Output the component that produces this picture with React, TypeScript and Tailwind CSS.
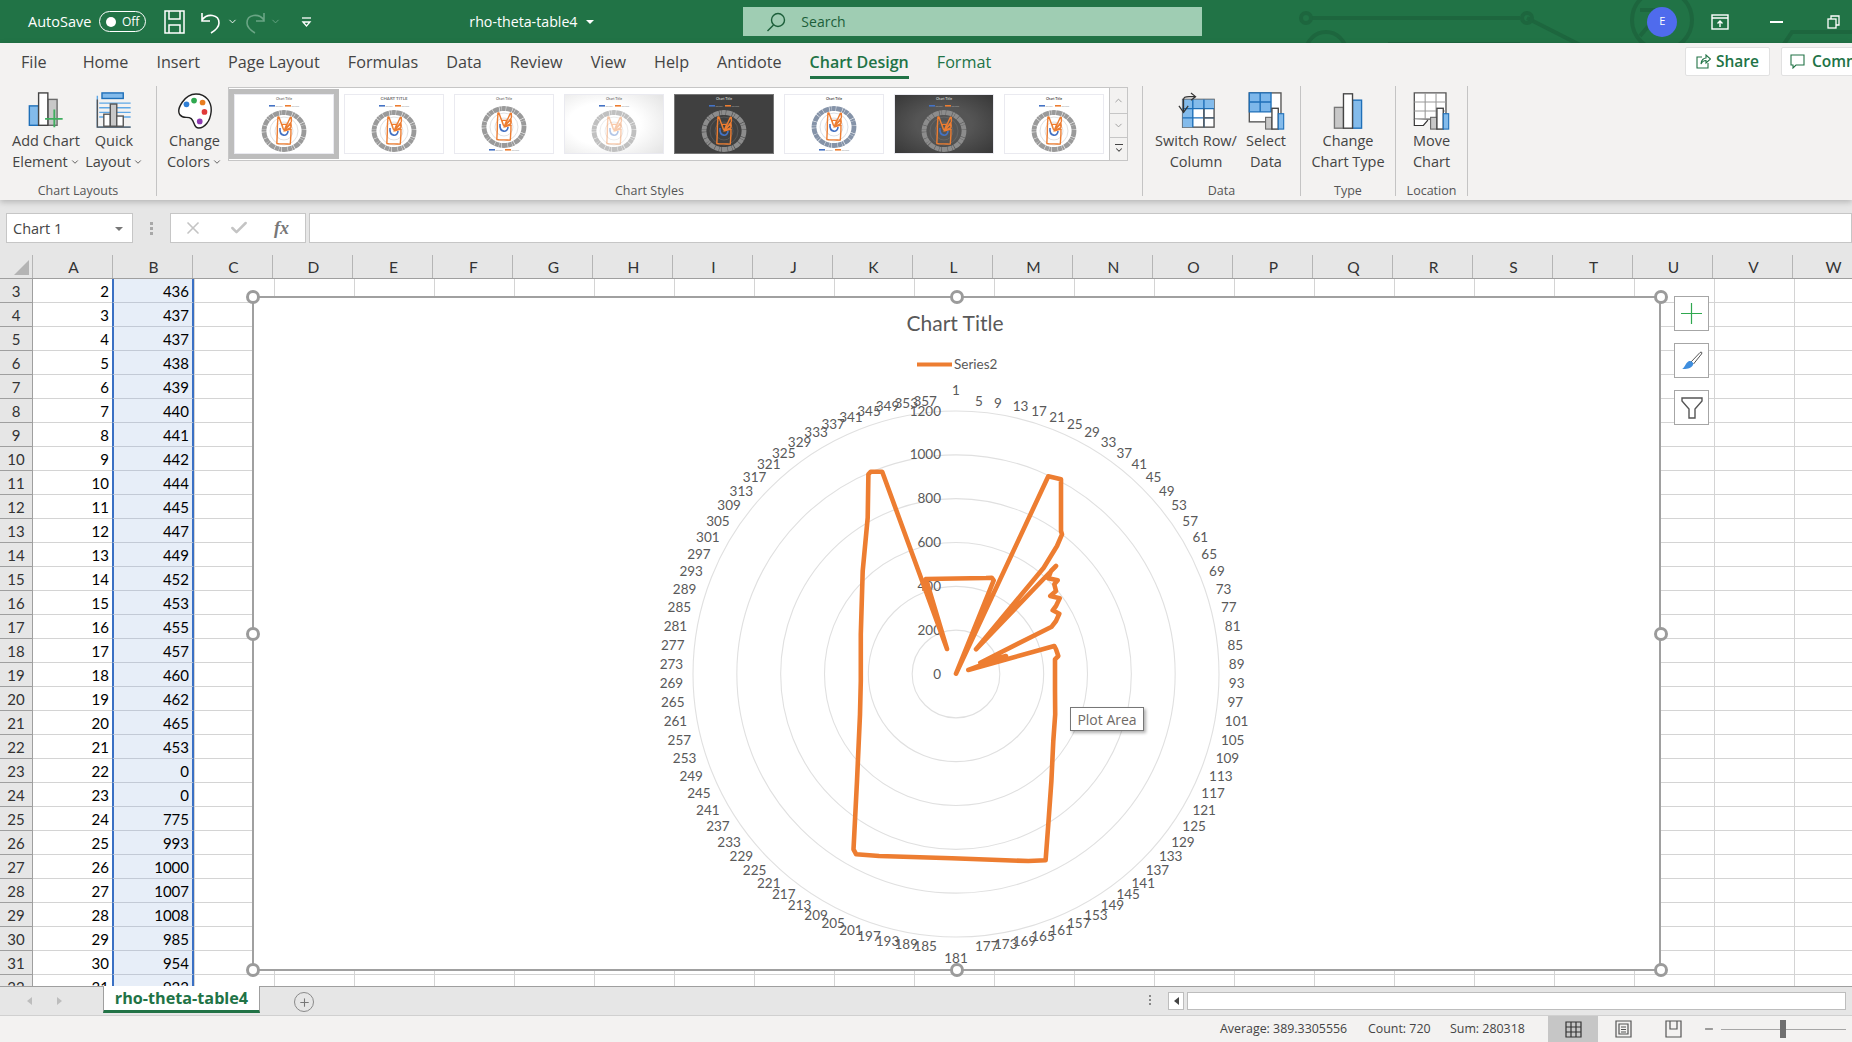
import { ReactNode } from "react";
import { ChevronDown, ChevronUp, Minus, Plus, Check, X } from "lucide-react";

const columns = "ABCDEFGHIJKLMNOPQRSTUVW".split("");
const values = [436, 437, 437, 438, 439, 440, 441, 442, 444, 445, 447, 449, 452, 453, 455, 457, 460, 462, 465, 453, 0, 0, 775, 993, 1000, 1007, 1008, 985, 954, 923];
const tabs = ["Home", "Insert", "Page Layout", "Formulas", "Data", "Review", "View", "Help", "Antidote"];

const CX = 955;
const CY = 673;
const R = 263;

// series outline, in page pixels
const series =
  "M946 648 L925 578 L985 577 L990.7 576.7 L992.7 579.3 L955 672.7 L1047.3 475.3 L1060 478.3 L1060 530 L1061 533.3 " +
  "L1056 545 L1042.7 566.7 L975 648.3 L1055 565 L1050 570 L1047.3 577.3 L1056.7 579.3 L1053.3 583.3 L1055 590 L1049.3 595 " +
  "L1058.7 597.3 L1055 605 L1051.7 609.3 L1058.3 612.7 L1055 620 L1050.7 625.7 L979.3 661.7 L1005 655 L967.3 669 L1053.3 645 " +
  "L1055 648.3 L1057.3 655 L1054 658.3 L1054 690 L1054.2 713.3 L1052.3 740 L1050.4 780 L1047.3 823.3 L1044.6 859.3 L1027.4 860 " +
  "L1004.4 859.3 L950.9 857.3 L878.1 855 L855.2 853.3 L852.5 848.3 L856 780 L859 713.3 L859.8 680 L859.8 633.3 L861.7 570 " +
  "L866.7 516.7 L867.4 473.3 L869.7 470.7 L881.2 470.7 Z";

const angleLabels = Array.from({ length: 90 }, (_, i) => 1 + i * 4);

function IconBox({ children }: { children: ReactNode }) {
  return <div className="h-[39px] flex items-center justify-center">{children}</div>;
}

function AddElementIcon() {
  return (
    <svg width="36" height="37" viewBox="0 0 38 40" fill="none">
      <rect x="1" y="15" width="10" height="21" fill="#83bbeb" stroke="#1e6fb8" strokeWidth="1.5" />
      <rect x="21" y="8" width="10" height="28" fill="#c8c8c8" stroke="#6b6b6b" strokeWidth="1.5" />
      <rect x="11" y="1" width="10" height="35" fill="#fff" stroke="#444" strokeWidth="1.5" />
      <path d="M28 19V38M18 29H37" stroke="#3fae5f" strokeWidth="2" />
    </svg>
  );
}

function QuickLayoutIcon() {
  return (
    <svg width="36" height="37" viewBox="0 0 38 40" fill="none">
      <rect x="6" y="1" width="23" height="6" fill="#83bbeb" stroke="#1e6fb8" strokeWidth="1.5" />
      <path d="M1 4V38H37M3 12H37M3 17H37M3 22H37M3 27H37" stroke="#5fa8e6" strokeWidth="1.5" />
      <path d="M1 8V38H37" stroke="#555" strokeWidth="1.5" />
      <rect x="8" y="24" width="7" height="13" fill="#fff" stroke="#555" strokeWidth="1.5" />
      <rect x="15" y="13" width="7" height="24" fill="#c8c8c8" stroke="#555" strokeWidth="1.5" />
      <rect x="22" y="26" width="7" height="11" fill="#fff" stroke="#555" strokeWidth="1.5" />
    </svg>
  );
}

function PaletteIcon() {
  return (
    <svg width="36" height="38" viewBox="0 0 38 40" fill="none">
      <path
        d="M20 2C31 2 37 11 36 21C35 31 29 38 23 38C17 38 19 31 15 28C11 25 7 29 3 24C-1 18 8 2 20 2Z"
        fill="#fff"
        stroke="#222"
        strokeWidth="1.5"
      />
      <circle cx="10" cy="13" r="3" fill="#2f7fd6" />
      <circle cx="18" cy="9" r="3" fill="#2fa84f" />
      <circle cx="27" cy="11" r="3" fill="#e87d1e" />
      <circle cx="29" cy="21" r="3" fill="#e03a3a" />
      <circle cx="24" cy="31" r="3" fill="#8e3ab0" />
    </svg>
  );
}

function SwitchIcon() {
  return (
    <svg width="37" height="37" viewBox="0 0 40 40" fill="none">
      <rect x="5" y="8" width="34" height="30" fill="#fff" stroke="#555" strokeWidth="1.5" />
      <path d="M5 8H39V18H16V38H5Z" fill="#83bbeb" />
      <path d="M5 18H39M5 28H39M16 8V38M28 8V38" stroke="#1e6fb8" strokeWidth="1.5" />
      <path d="M28 28H39M28 18V38" stroke="#555" strokeWidth="1.5" />
      <path d="M1 15L6 22L11 15M6 22V8Q6 5 12 5H18M14 1L19 5L14 9" stroke="#333" strokeWidth="1.3" fill="none" />
    </svg>
  );
}

function SelectDataIcon() {
  return (
    <svg width="37" height="38" viewBox="0 0 40 42" fill="none">
      <rect x="1" y="1" width="35" height="32" fill="#fff" stroke="#555" strokeWidth="1.5" />
      <path d="M1 1H25V22H1Z" fill="#7db7ea" stroke="#1e6fb8" strokeWidth="1.5" />
      <path d="M1 11H25M13 1V22" stroke="#1e6fb8" strokeWidth="1.5" />
      <rect x="19" y="28" width="7" height="13" fill="#c8c8c8" stroke="#666" strokeWidth="1.2" />
      <rect x="26" y="18" width="7" height="23" fill="#fff" stroke="#444" strokeWidth="1.5" />
      <rect x="33" y="24" width="6" height="17" fill="#83bbeb" stroke="#1e6fb8" strokeWidth="1.2" />
    </svg>
  );
}

function ChartTypeIcon() {
  return (
    <svg width="32" height="38" viewBox="0 0 34 42" fill="none">
      <rect x="2" y="17" width="10" height="23" fill="#c8c8c8" stroke="#777" strokeWidth="1.5" />
      <rect x="22" y="9" width="10" height="31" fill="#83bbeb" stroke="#1e6fb8" strokeWidth="1.5" />
      <rect x="12" y="2" width="10" height="38" fill="#fff" stroke="#444" strokeWidth="1.5" />
    </svg>
  );
}

function MoveChartIcon() {
  return (
    <svg width="37" height="38" viewBox="0 0 40 42" fill="none">
      <path d="M1 1H36V30H1Z" fill="#fff" stroke="#555" strokeWidth="1.5" />
      <path d="M1 11H36M1 21H36M13 1V30M25 1V30" stroke="#999" strokeWidth="1.2" />
      <path d="M1 30V37H11L16 31" fill="#fff" stroke="#333" strokeWidth="1.3" />
      <rect x="19" y="28" width="7" height="13" fill="#c8c8c8" stroke="#666" strokeWidth="1.2" />
      <rect x="26" y="18" width="7" height="23" fill="#fff" stroke="#444" strokeWidth="1.5" />
      <rect x="33" y="24" width="6" height="17" fill="#83bbeb" stroke="#1e6fb8" strokeWidth="1.2" />
    </svg>
  );
}

function BigButton({ icon, lines, width, caret }: { icon: ReactNode; lines: string[]; width: string; caret?: boolean }) {
  return (
    <div className={`${width} pt-[5px] flex flex-col items-center text-[14.5px] leading-[21px] text-[#444] shrink-0`}>
      <IconBox>{icon}</IconBox>
      <span className="whitespace-nowrap">{lines[0]}</span>
      <span className="flex items-center gap-[2px] whitespace-nowrap">
        {lines[1]}
        {caret && <ChevronDown size={10} strokeWidth={2} />}
      </span>
    </div>
  );
}

function Group({ label, width, pad, children }: { label: string; width: string; pad: string; children: ReactNode }) {
  return (
    <div className={`${width} h-[110px] mt-px flex flex-col border-r border-[#c4c4c4] shrink-0`}>
      <div className={`flex-1 flex items-start ${pad}`}>{children}</div>
      <div className="h-[20px] -mb-[5px] text-center text-[12.5px] leading-[20px] text-[#555]">{label}</div>
    </div>
  );
}

type ThumbStyle = {
  bg: string;
  ring: string;
  title: string;
  titleColor: string;
  legendBottom?: boolean;
  size?: number;
  fade?: boolean;
};

const thumbs: ThumbStyle[] = [
  { bg: "#fff", ring: "#9a9a9a", title: "Chart Title", titleColor: "#777" },
  { bg: "#fff", ring: "#9a9a9a", title: "CHART TITLE", titleColor: "#777", size: 4.4 },
  { bg: "#fff", ring: "#9a9a9a", title: "Chart Title", titleColor: "#777", legendBottom: true },
  { bg: "url(#thumbFade)", ring: "#c0c0c0", title: "Chart Title", titleColor: "#777", fade: true },
  { bg: "#404040", ring: "#8c8c8c", title: "Chart Title", titleColor: "#ccc" },
  { bg: "#fff", ring: "#8593a8", title: "Chart Title", titleColor: "#444", legendBottom: true },
  { bg: "url(#thumbDark)", ring: "#8c8c8c", title: "Chart Title", titleColor: "#ccc" },
  { bg: "#fff", ring: "#9a9a9a", title: "Chart Title", titleColor: "#444" },
];

function Thumb({ style }: { style: ThumbStyle }) {
  const legendY = style.legendBottom ? 56 : 12;
  const cy = style.legendBottom ? 33 : 37;
  const textFill = style.titleColor === "#ccc" ? "#aaa" : "#999";
  return (
    <svg width="100" height="60" viewBox="0 0 100 60" className="block">
      <defs>
        <radialGradient id="thumbFade" cx="0.4" cy="0.5" r="0.8">
          <stop offset="0.45" stopColor="#fff" />
          <stop offset="1" stopColor="#e2e2e2" />
        </radialGradient>
        <radialGradient id="thumbDark" r="0.8">
          <stop offset="0.35" stopColor="#555" />
          <stop offset="1" stopColor="#303030" />
        </radialGradient>
      </defs>
      <rect x="0.5" y="0.5" width="99" height="59" fill={style.bg} stroke={style.bg === "#404040" ? "#777" : "#eaeaf0"} />
      <text x="50" y="6" textAnchor="middle" fontSize={style.size ?? 3.4} fill={style.titleColor} fontFamily="Lato" fontWeight="700">
        {style.title}
      </text>
      <rect x="35" y={legendY - 1} width="6" height="1.6" fill="#4472c4" />
      <text x="41.5" y={legendY + 0.6} fontSize="2.4" fill={textFill} fontFamily="Lato">
        Series1
      </text>
      <rect x="51" y={legendY - 1} width="6" height="1.6" fill="#ed7d31" />
      <text x="57.5" y={legendY + 0.6} fontSize="2.4" fill={textFill} fontFamily="Lato">
        Series2
      </text>
      <ellipse cx="50" cy={cy} rx="20" ry="18.5" fill="none" stroke={style.ring} strokeWidth="4.8" strokeDasharray="6 0.5 2 0.3 4 0.4" />
      <circle cx="50" cy={cy} r="14" fill="none" stroke={style.ring} strokeWidth="0.3" />
      <circle cx="50" cy={cy} r="9" fill="none" stroke={style.ring} strokeWidth="0.3" />
      <g transform={`translate(50 ${cy}) scale(0.07) translate(-955 -673)`} opacity={style.fade ? 0.4 : 1}>
        <path d={series} fill="none" stroke="#ed7d31" strokeWidth="20" strokeLinejoin="round" />
      </g>
      <path d={`M46 ${cy - 3}C45 ${cy + 6} 54 ${cy + 6} 54 ${cy}`} fill="none" stroke="#4472c4" strokeWidth="1.6" opacity={style.fade ? 0.4 : 1} />
    </svg>
  );
}

function Gallery() {
  return (
    <div className="mt-px w-[900px] h-[74px] flex bg-white border border-[#c6c6c6] shrink-0">
      <div className="flex items-center flex-1">
        {thumbs.map((t, i) => (
          <div
            key={i}
            className={
              i === 0
                ? "w-[110px] h-[70px] border-[5px] border-[#bdbdbd] flex items-center justify-center shrink-0"
                : "w-[110px] h-[70px] flex items-center justify-center shrink-0"
            }
          >
            <Thumb style={t} />
          </div>
        ))}
      </div>
      <div className="w-[18px] flex flex-col bg-[#f3f2f1] text-[#9a9a9a]">
        <div className="h-[26px] flex items-center justify-center border-l border-b border-[#c6c6c6]">
          <ChevronUp size={11} />
        </div>
        <div className="h-[24px] flex items-center justify-center border-l border-b border-[#c6c6c6]">
          <ChevronDown size={11} />
        </div>
        <div className="flex-1 flex flex-col items-center justify-center border-l border-[#c6c6c6] text-[#444]">
          <div className="w-[8px] h-px bg-[#444]" />
          <ChevronDown size={10} strokeWidth={2.5} />
        </div>
      </div>
    </div>
  );
}

function TitleBar() {
  return (
    <div className="relative h-[43px] bg-[#217346] flex items-center text-white shrink-0 overflow-hidden">
      <svg className="absolute left-0 top-0" width="1852" height="43" fill="none" stroke="#1d663e" strokeWidth="4">
        <path d="M1311 18H1520M1527 18L1590 50" />
        <circle cx="1306" cy="18" r="5" />
        <circle cx="1527" cy="18" r="5" />
        <path d="M1390 50V44H1520" />
        <circle cx="1326" cy="52" r="20" />
        <circle cx="1662" cy="20" r="30" />
        <path d="M1640 10H1662L1640 36" />
        <path d="M1780 50L1792 32H1852" />
      </svg>
      <div className="relative flex items-center w-full">
        <span className="ml-[28px] text-[14.5px]">AutoSave</span>
        <div className="ml-[8px] w-[47px] h-[21px] rounded-full border border-white flex items-center justify-between px-[6px]">
          <span className="w-[10px] h-[10px] rounded-full bg-white" />
          <span className="text-[12px]">Off</span>
        </div>
        <svg className="ml-[18px]" width="21" height="24" viewBox="0 0 21 24" fill="none" stroke="#fff" strokeWidth="1.5">
          <path d="M1 1H20V23H1Z" />
          <path d="M5 1V9H16V1M5 23V15H16V23" />
        </svg>
        <svg className="ml-[16px]" width="20" height="24" viewBox="0 0 20 24" fill="none" stroke="#fff" strokeWidth="1.6">
          <path d="M1 3V11H9M1 10C6 3 18 4 18 13C18 17 15 20 10 23" />
        </svg>
        <ChevronDown size={11} className="ml-[6px]" strokeWidth={2} />
        <svg className="ml-[7px]" width="20" height="24" viewBox="0 0 20 24" fill="none" stroke="#6aa585" strokeWidth="1.6">
          <path d="M19 3V11H11M19 10C14 3 2 4 2 13C2 17 5 20 10 23" />
        </svg>
        <ChevronDown size={11} className="ml-[5px] text-[#6aa585]" strokeWidth={2} />
        <svg className="ml-[20px]" width="11" height="12" viewBox="0 0 11 12" fill="none" stroke="#fff" strokeWidth="1.3">
          <path d="M1 2H10" />
          <path d="M2 6L5.5 10L9 6Z" />
        </svg>
        <span className="ml-[157px] w-[109px] text-[14.2px] whitespace-nowrap">rho-theta-table4</span>
        <span className="ml-[8px] w-0 h-0 border-x-[4px] border-x-transparent border-t-[4px] border-t-white" />
        <div className="ml-[149px] w-[459px] h-[29px] bg-[#9fcdb3] flex items-center text-[#1c5f3a] shrink-0">
          <svg className="ml-[23px]" width="20" height="20" viewBox="0 0 20 20" fill="none" stroke="#1c5f3a" strokeWidth="1.4">
            <circle cx="12" cy="8" r="6.5" />
            <path d="M7.5 13L1.5 19" />
          </svg>
          <span className="ml-[15px] text-[14px]">Search</span>
        </div>
        <div className="ml-[445px] w-[30px] h-[30px] rounded-full bg-[#4f6bed] flex items-center justify-center text-[11px] shrink-0">E</div>
        <svg className="ml-[34px]" width="18" height="16" viewBox="0 0 18 16" fill="none" stroke="#fff" strokeWidth="1.4">
          <rect x="1" y="1" width="16" height="14" />
          <path d="M1 4H17M9 13V7M6.5 9.5L9 7L11.5 9.5" />
        </svg>
        <div className="ml-[41px] w-[13px] h-[2px] bg-white" />
        <svg className="ml-[44px]" width="13" height="14" viewBox="0 0 13 14" fill="none" stroke="#fff" strokeWidth="1.3">
          <rect x="1" y="4" width="8" height="9" />
          <path d="M4 4V1H12V10H9" />
        </svg>
      </div>
    </div>
  );
}

function Ribbon() {
  return (
    <div className="relative z-10 h-[157px] bg-[#f3f2f1] shadow-[0_2px_6px_rgba(0,0,0,0.22)] shrink-0 overflow-hidden">
      <div className="h-[38px] flex items-center pl-[21px] gap-[28px] text-[16.2px] text-[#444] whitespace-nowrap relative mb-[4px]">
        <span className="mr-[8px]">File</span>
        {tabs.map((t) => (
          <span key={t}>{t}</span>
        ))}
        <span className="relative font-semibold text-[16px] text-[#217346]">
          Chart Design
          <span className="absolute left-0 right-0 -bottom-[5px] h-[3px] bg-[#217346]" />
        </span>
        <span className="text-[#217346]">Format</span>
        <div className="absolute left-[1685px] top-[4px] w-[85px] h-[29px] bg-white border border-[#e1e1e1] rounded-[2px] flex items-center justify-center gap-[5px] text-[15.5px] font-semibold text-[#217346]">
          <svg className="shrink-0" width="15" height="15" viewBox="0 0 15 15" fill="none" stroke="#217346" strokeWidth="1.1">
            <path d="M6 3H1V14H12V9M5 10C5 6 8 4 10 4V1L14.5 5L10 9V6.5C8 6.5 6 8 5 10Z" />
          </svg>
          Share
        </div>
        <div className="absolute left-[1781px] top-[4px] w-[110px] h-[29px] bg-white border border-[#e1e1e1] rounded-[2px] flex items-center pl-[8px] gap-[7px] text-[15.5px] font-semibold text-[#217346]">
          <svg className="shrink-0" width="15" height="15" viewBox="0 0 15 15" fill="none" stroke="#217346" strokeWidth="1.1">
            <path d="M1 1H14V11H6L3 14V11H1Z" />
          </svg>
          Comments
        </div>
      </div>
      <div className="flex">
        <Group label="Chart Layouts" width="w-[157px]" pad="pl-[12px]">
          <BigButton icon={<AddElementIcon />} lines={["Add Chart", "Element"]} width="w-[68px]" caret />
          <BigButton icon={<QuickLayoutIcon />} lines={["Quick", "Layout"]} width="w-[68px]" caret />
        </Group>
        <Group label="Chart Styles" width="w-[986px]" pad="pl-[4px]">
          <BigButton icon={<PaletteIcon />} lines={["Change", "Colors"]} width="w-[67px]" caret />
          <Gallery />
        </Group>
        <Group label="Data" width="w-[158px]" pad="pl-[18px]">
          <BigButton icon={<SwitchIcon />} lines={["Switch Row/", "Column"]} width="w-[70px]" />
          <BigButton icon={<SelectDataIcon />} lines={["Select", "Data"]} width="w-[70px]" />
        </Group>
        <Group label="Type" width="w-[95px]" pad="justify-center">
          <BigButton icon={<ChartTypeIcon />} lines={["Change", "Chart Type"]} width="w-[90px]" />
        </Group>
        <Group label="Location" width="w-[72px]" pad="justify-center">
          <BigButton icon={<MoveChartIcon />} lines={["Move", "Chart"]} width="w-[70px]" />
        </Group>
      </div>
    </div>
  );
}

function FormulaBar() {
  return (
    <div className="h-[55px] bg-[#e6e6e6] pt-[13px] pl-[6px] flex items-start shrink-0">
      <div className="w-[127px] h-[30px] bg-white border border-[#c6c6c6] flex items-center justify-between pl-[6px] pr-[9px] pt-[1px] text-[14.5px] text-[#444]">
        Chart 1
        <span className="w-0 h-0 border-x-[4px] border-x-transparent border-t-[4px] border-t-[#777]" />
      </div>
      <div className="w-[37px] h-[30px] flex flex-col items-center justify-center gap-[2px]">
        <span className="w-[3px] h-[3px] bg-[#a8a8a8]" />
        <span className="w-[3px] h-[3px] bg-[#a8a8a8]" />
        <span className="w-[3px] h-[3px] bg-[#a8a8a8]" />
      </div>
      <div className="w-[136px] h-[30px] bg-white border border-[#c6c6c6] flex items-center text-[#c4c4c4]">
        <X size={20} className="ml-[12px]" strokeWidth={2} />
        <Check size={20} className="ml-[26px]" strokeWidth={3} />
        <span className="ml-[25px] font-['Liberation_Serif',serif] italic font-bold text-[18px] text-[#777]">fx</span>
      </div>
      <div className="ml-[3px] flex-1 h-[30px] bg-white border border-[#c6c6c6]" />
    </div>
  );
}

function ColumnHeaders() {
  return (
    <div className="h-[24px] flex bg-[#e6e6e6] border-b border-[#9f9f9f] shrink-0 overflow-hidden font-['Lato',sans-serif] text-[15.5px] text-[#333]">
      <div className="w-[33px] h-full border-r border-[#b5b5b5] relative shrink-0">
        <span className="absolute right-[3px] bottom-[3px] w-0 h-0 border-l-[15px] border-l-transparent border-b-[15px] border-b-[#b4b4b4]" />
      </div>
      {columns.map((c) => (
        <div key={c} className="w-[80px] h-full border-r border-[#b5b5b5] flex items-center justify-center pl-[2px] pt-[2px] shrink-0">
          {c}
        </div>
      ))}
    </div>
  );
}

function Rows() {
  return (
    <div className="font-['Lato',sans-serif] text-[15px] text-black">
      {values.map((v, i) => (
        <div key={i} className="h-[24px] flex">
          <div className="w-[33px] bg-[#e6e6e6] border-r border-b border-[#9f9f9f] flex items-center justify-center pt-[2px] text-[#333] shrink-0">
            {i + 3}
          </div>
          <div className="w-[79px] border-b border-[#d4d4d4] flex items-center justify-end pr-[3px] pt-[2px] shrink-0">{i + 2}</div>
          <div className="w-[82px] bg-[#e7eef8] border-x-2 border-x-[#3a70c4] border-b border-b-[#c3cad6] flex items-center justify-end pr-[3px] pt-[2px] shrink-0">
            {v}
          </div>
          {columns.slice(2).map((c) => (
            <div key={c} className="w-[80px] border-l border-b border-[#d4d4d4] shrink-0" />
          ))}
        </div>
      ))}
    </div>
  );
}

function RadarChart() {
  const labels = angleLabels.map((deg) => {
    const t = ((deg - 1) * Math.PI) / 180;
    const px = CX + R * Math.sin(t);
    const py = CY - R * Math.cos(t);
    if (deg === 1) return { deg, x: CX, y: 389, anchor: "middle" };
    if (deg === 181) return { deg, x: CX, y: 957, anchor: "middle" };
    return {
      deg,
      x: px + Math.sin(t) * 10,
      y: py - Math.cos(t) * 10,
      anchor: Math.sin(t) > 0 ? "start" : "end",
    };
  });

  return (
    <svg className="absolute inset-0 overflow-visible" width="1407" height="673" viewBox="253 297 1407 673" fontFamily="Lato">
      {[1, 2, 3, 4, 5, 6].map((k) => (
        <circle key={k} cx={CX} cy={CY} r={(k * R) / 6} fill="none" stroke="#e0e0e0" strokeWidth="1.1" />
      ))}
      <text x={CX - 1} y={330} textAnchor="middle" fontSize="21" fill="#595959">
        Chart Title
      </text>
      <path d="M916 363.5H951" stroke="#ed7d31" strokeWidth="4" />
      <text x={953} y={367.5} fontSize="13.5" fill="#595959">
        Series2
      </text>
      {labels.map((l) => (
        <text key={l.deg} x={l.x} y={l.y + 4.5} textAnchor={l.anchor as "start" | "end" | "middle"} fontSize="13.5" fill="#595959">
          {l.deg}
        </text>
      ))}
      {[0, 200, 400, 600, 800, 1000, 1200].map((v, i) => (
        <text key={v} x={940} y={CY - (i * R) / 6 + 4.5} textAnchor="end" fontSize="13.5" fill="#595959">
          {v}
        </text>
      ))}
      <path d={series} fill="none" stroke="#ed7d31" strokeWidth="4.6" strokeLinejoin="round" strokeLinecap="round" />
    </svg>
  );
}

function Handle({ className }: { className: string }) {
  return <span className={`absolute w-[14px] h-[14px] rounded-full bg-white border-[3px] border-[#9b9b9b] ${className}`} />;
}

function ChartObject() {
  return (
    <>
      <div className="absolute left-[252px] top-[17px] w-[1409px] h-[675px] bg-white border-2 border-[#a0a0a0]">
        <RadarChart />
        <Handle className="-left-[8px] -top-[8px]" />
        <Handle className="left-[696px] -top-[8px]" />
        <Handle className="-right-[9px] -top-[8px]" />
        <Handle className="-left-[8px] top-[329px]" />
        <Handle className="-right-[9px] top-[329px]" />
        <Handle className="-left-[8px] -bottom-[8px]" />
        <Handle className="left-[696px] -bottom-[8px]" />
        <Handle className="-right-[9px] -bottom-[8px]" />
        <div className="absolute left-[816px] top-[409px] w-[74px] h-[24px] bg-white border border-[#777] shadow-[2px_2px_3px_rgba(0,0,0,0.3)] flex items-center justify-center text-[14px] text-[#6f6a66]">
          Plot Area
        </div>
      </div>
      <div className="absolute left-[1674px] top-[17px] flex flex-col gap-[12px]">
        <div className="w-[35px] h-[35px] bg-white border border-[#a6a6a6] flex items-center justify-center">
          <svg width="21" height="21" viewBox="0 0 21 21" stroke="#2fa84f" strokeWidth="1.2">
            <path d="M10.5 0V21M0 10.5H21" />
          </svg>
        </div>
        <div className="w-[35px] h-[35px] bg-white border border-[#a6a6a6] flex items-center justify-center">
          <svg width="22" height="20" viewBox="0 0 22 20" fill="none">
            <path d="M10 11L19 1.5C20.5 0.5 21.5 1.5 20.5 3L12.5 13" fill="#fff" stroke="#555" strokeWidth="1" />
            <path d="M8 10C11 10 13 12 12 14C10 18 5 18 1 18C4 17 4 12 8 10Z" fill="#3f8ede" />
          </svg>
        </div>
        <div className="w-[35px] h-[35px] bg-white border border-[#a6a6a6] flex items-center justify-center">
          <svg width="22" height="22" viewBox="0 0 22 22" fill="none" stroke="#555" strokeWidth="1.4">
            <path d="M1 1H21V4L14 12V21H8V12L1 4Z" />
          </svg>
        </div>
      </div>
    </>
  );
}

function SheetTabs() {
  return (
    <div className="relative z-10 h-[29px] bg-[#e6e6e6] border-t border-[#9f9f9f] flex shrink-0">
      <span className="ml-[27px] mt-[10px] w-0 h-0 border-y-[4px] border-y-transparent border-r-[5px] border-r-[#bdbdbd]" />
      <span className="ml-[25px] mt-[10px] w-0 h-0 border-y-[4px] border-y-transparent border-l-[5px] border-l-[#bdbdbd]" />
      <div className="ml-[41px] -mt-px w-[157px] h-[27px] bg-white border-x border-[#9f9f9f] border-b-[3px] border-b-[#217346] flex items-center justify-center text-[16.2px] font-bold text-[#217346] whitespace-nowrap">
        rho-theta-table4
      </div>
      <div className="ml-[34px] mt-[5px] w-[20px] h-[20px] rounded-full border-[1.5px] border-[#8a8a8a] flex items-center justify-center text-[#777]">
        <Plus size={13} strokeWidth={2} />
      </div>
      <div className="ml-[835px] mt-[8px] flex flex-col gap-[2px]">
        <span className="w-[2px] h-[2px] bg-[#888]" />
        <span className="w-[2px] h-[2px] bg-[#888]" />
        <span className="w-[2px] h-[2px] bg-[#888]" />
      </div>
      <div className="ml-[17px] mt-[5px] w-[16px] h-[18px] bg-white border border-[#bdbdbd] flex items-center justify-center">
        <span className="w-0 h-0 border-y-[4px] border-y-transparent border-r-[5px] border-r-[#444]" />
      </div>
      <div className="ml-[3px] mt-[5px] w-[659px] h-[18px] bg-white border border-[#bdbdbd]" />
    </div>
  );
}

function StatusBar() {
  return (
    <div className="h-[27px] bg-[#f3f2f1] border-t border-[#d0d0d0] flex items-center text-[12.4px] text-[#444] shrink-0 whitespace-nowrap">
      <span className="ml-[1220px] w-[148px]">Average: 389.3305556</span>
      <span className="w-[82px]">Count: 720</span>
      <span className="w-[98px]">Sum: 280318</span>
      <div className="w-[50px] h-full bg-[#c6c6c6] flex items-center justify-center">
        <svg width="17" height="17" viewBox="0 0 17 17" fill="none" stroke="#333" strokeWidth="1.2">
          <path d="M1 1H16V16H1ZM6 1V16M11 1V16M1 6H16M1 11H16" />
        </svg>
      </div>
      <div className="w-[50px] flex justify-center">
        <svg width="17" height="18" viewBox="0 0 17 18" fill="none" stroke="#555" strokeWidth="1.2">
          <path d="M1 1H16V17H1ZM4 4H13V14H4ZM6 7H11M6 9.5H11M6 12H11" />
        </svg>
      </div>
      <div className="w-[50px] flex justify-center">
        <svg width="17" height="18" viewBox="0 0 17 18" fill="none" stroke="#555" strokeWidth="1.2">
          <path d="M1 1H16V17H1ZM5 1V9H12V1" />
        </svg>
      </div>
      <Minus size={12} className="ml-[5px] text-[#444]" />
      <div className="relative ml-[6px] w-[125px] h-px bg-[#a6a6a6]">
        <span className="absolute left-[59px] -top-[9px] w-[6px] h-[18px] bg-[#6f6f6f]" />
      </div>
    </div>
  );
}

export default function App() {
  return (
    <div className="w-[1852px] h-[1042px] flex flex-col overflow-hidden bg-white font-['Open_Sans',sans-serif]">
      <TitleBar />
      <Ribbon />
      <FormulaBar />
      <ColumnHeaders />
      <div className="relative flex-1 overflow-hidden">
        <Rows />
        <ChartObject />
      </div>
      <SheetTabs />
      <StatusBar />
    </div>
  );
}
